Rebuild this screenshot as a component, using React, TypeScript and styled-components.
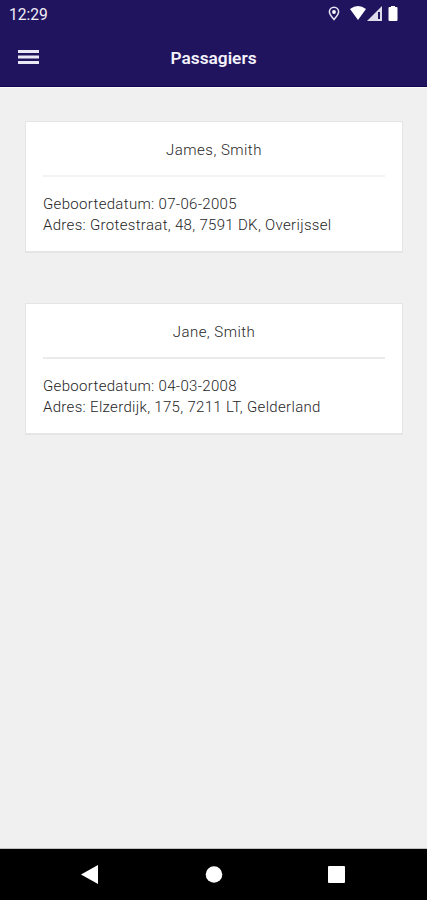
import React from 'react';
import styled, { createGlobalStyle } from 'styled-components';

const GlobalStyle = createGlobalStyle`
  * { box-sizing: border-box; }
  body { margin: 0; font-family: Roboto, sans-serif; }
`;

const Screen = styled.div`
  display: flex;
  flex-direction: column;
  width: 427px;
  height: 900px;
  background: #f0f0f0;
  overflow: hidden;
`;

const StatusBar = styled.div`
  display: flex;
  align-items: center;
  justify-content: space-between;
  height: 28px;
  padding: 0 28px 0 9px;
  background: #21145f;
  color: #f1eff8;
  font-size: 15.6px;
`;

const Clock = styled.span`
  padding-top: 2px;
  line-height: 18px;
`;

const StatusIcons = styled.div`
  display: flex;
  align-items: center;
`;

const Header = styled.header`
  display: grid;
  grid-template-columns: 60px 1fr 60px;
  align-items: center;
  height: 59px;
  background: #21145f;
  border-bottom: 1px solid #130752;
  color: #f4f2fa;
`;

const MenuButton = styled.button`
  display: flex;
  padding: 0 0 0 18px;
  border: 0;
  background: none;
`;

const Title = styled.h1`
  margin: 0;
  padding-top: 2px;
  text-align: center;
  font-size: 17.3px;
  font-weight: 600;
  line-height: 24px;
`;

const Content = styled.main`
  flex: 1;
  display: flex;
  flex-direction: column;
  gap: 50px;
  padding: 33px 24px 0 25px;
  border-top: 1px solid #faf9fc;
  border-bottom: 1px solid #c0c0c0;
`;

const Card = styled.article`
  height: 132px;
  padding: 17px;
  background: #fff;
  border: 1px solid #e4e5e6;
  border-bottom-width: 2px;
`;

const Name = styled.h2<{ $rule: string }>`
  margin: 0 0 17px;
  padding-bottom: 14px;
  border-bottom: 2px solid ${({ $rule }) => $rule};
  text-align: center;
  font-size: 15px;
  font-weight: 300;
  letter-spacing: 0.47px;
  line-height: 22px;
  color: #262626;
`;

const Detail = styled.p`
  margin: 0;
  font-size: 15px;
  font-weight: 300;
  letter-spacing: 0.32px;
  line-height: 21px;
  color: #262626;
  white-space: nowrap;
`;

const NavBar = styled.nav`
  display: flex;
  align-items: center;
  height: 51px;
  background: #000;
`;

const passengers = [
  { name: 'James, Smith', born: '07-06-2005', address: 'Grotestraat, 48, 7591 DK, Overijssel', rule: '#f3f3f3' },
  { name: 'Jane, Smith', born: '04-03-2008', address: 'Elzerdijk, 175, 7211 LT, Gelderland', rule: '#ebebeb' },
];

export default function App() {
  return (
    <Screen>
      <GlobalStyle />
      <StatusBar>
        <Clock>12:29</Clock>
        <StatusIcons>
          <svg width="74" height="20" viewBox="325 4 74 20" fill="#fff">
            <path d="M334 19.500c-3-3.600-4.600-5-4.600-7.700a4.600 4.600 0 0 1 9.200 0c0 2.700-1.600 4.100-4.600 7.700z" fill="none" stroke="#e9e6f3" strokeWidth="1.500" />
            <circle cx="334" cy="12" r="1.900" />
            <path d="M350 9q8-6 16 0l-8 11z" />
            <path d="M382 6v15h-15z" fill="#dedbea" />
            <path d="M378 12h2v7h-2z" fill="#21145f" />
            <path d="M388.500 8q0-1 1-1h1.500V6h4v1h1.500q1 0 1 1v12q0 1-1 1h-7q-1 0-1-1z" />
          </svg>
        </StatusIcons>
      </StatusBar>
      <Header>
        <MenuButton aria-label="Menu">
          <svg width="21" height="14" viewBox="0 0 21 14" fill="#eae8f4"><path d="M0 0h21v3H0zM0 5.500h21v3H0zM0 11h21v3H0z" /></svg>
        </MenuButton>
        <Title>Passagiers</Title>
      </Header>
      <Content>
        {passengers.map((p) => (
          <Card key={p.name}>
            <Name $rule={p.rule}>{p.name}</Name>
            <Detail>Geboortedatum: {p.born}</Detail>
            <Detail>Adres: {p.address}</Detail>
          </Card>
        ))}
      </Content>
      <NavBar>
        <svg width="427" height="51" viewBox="0 849 427 51" fill="#fff">
          <path d="M98 865v19l-17-9.500z" />
          <circle cx="214" cy="874.500" r="8.300" />
          <rect x="328" y="866" width="17" height="17" rx="1" />
        </svg>
      </NavBar>
    </Screen>
  );
}
